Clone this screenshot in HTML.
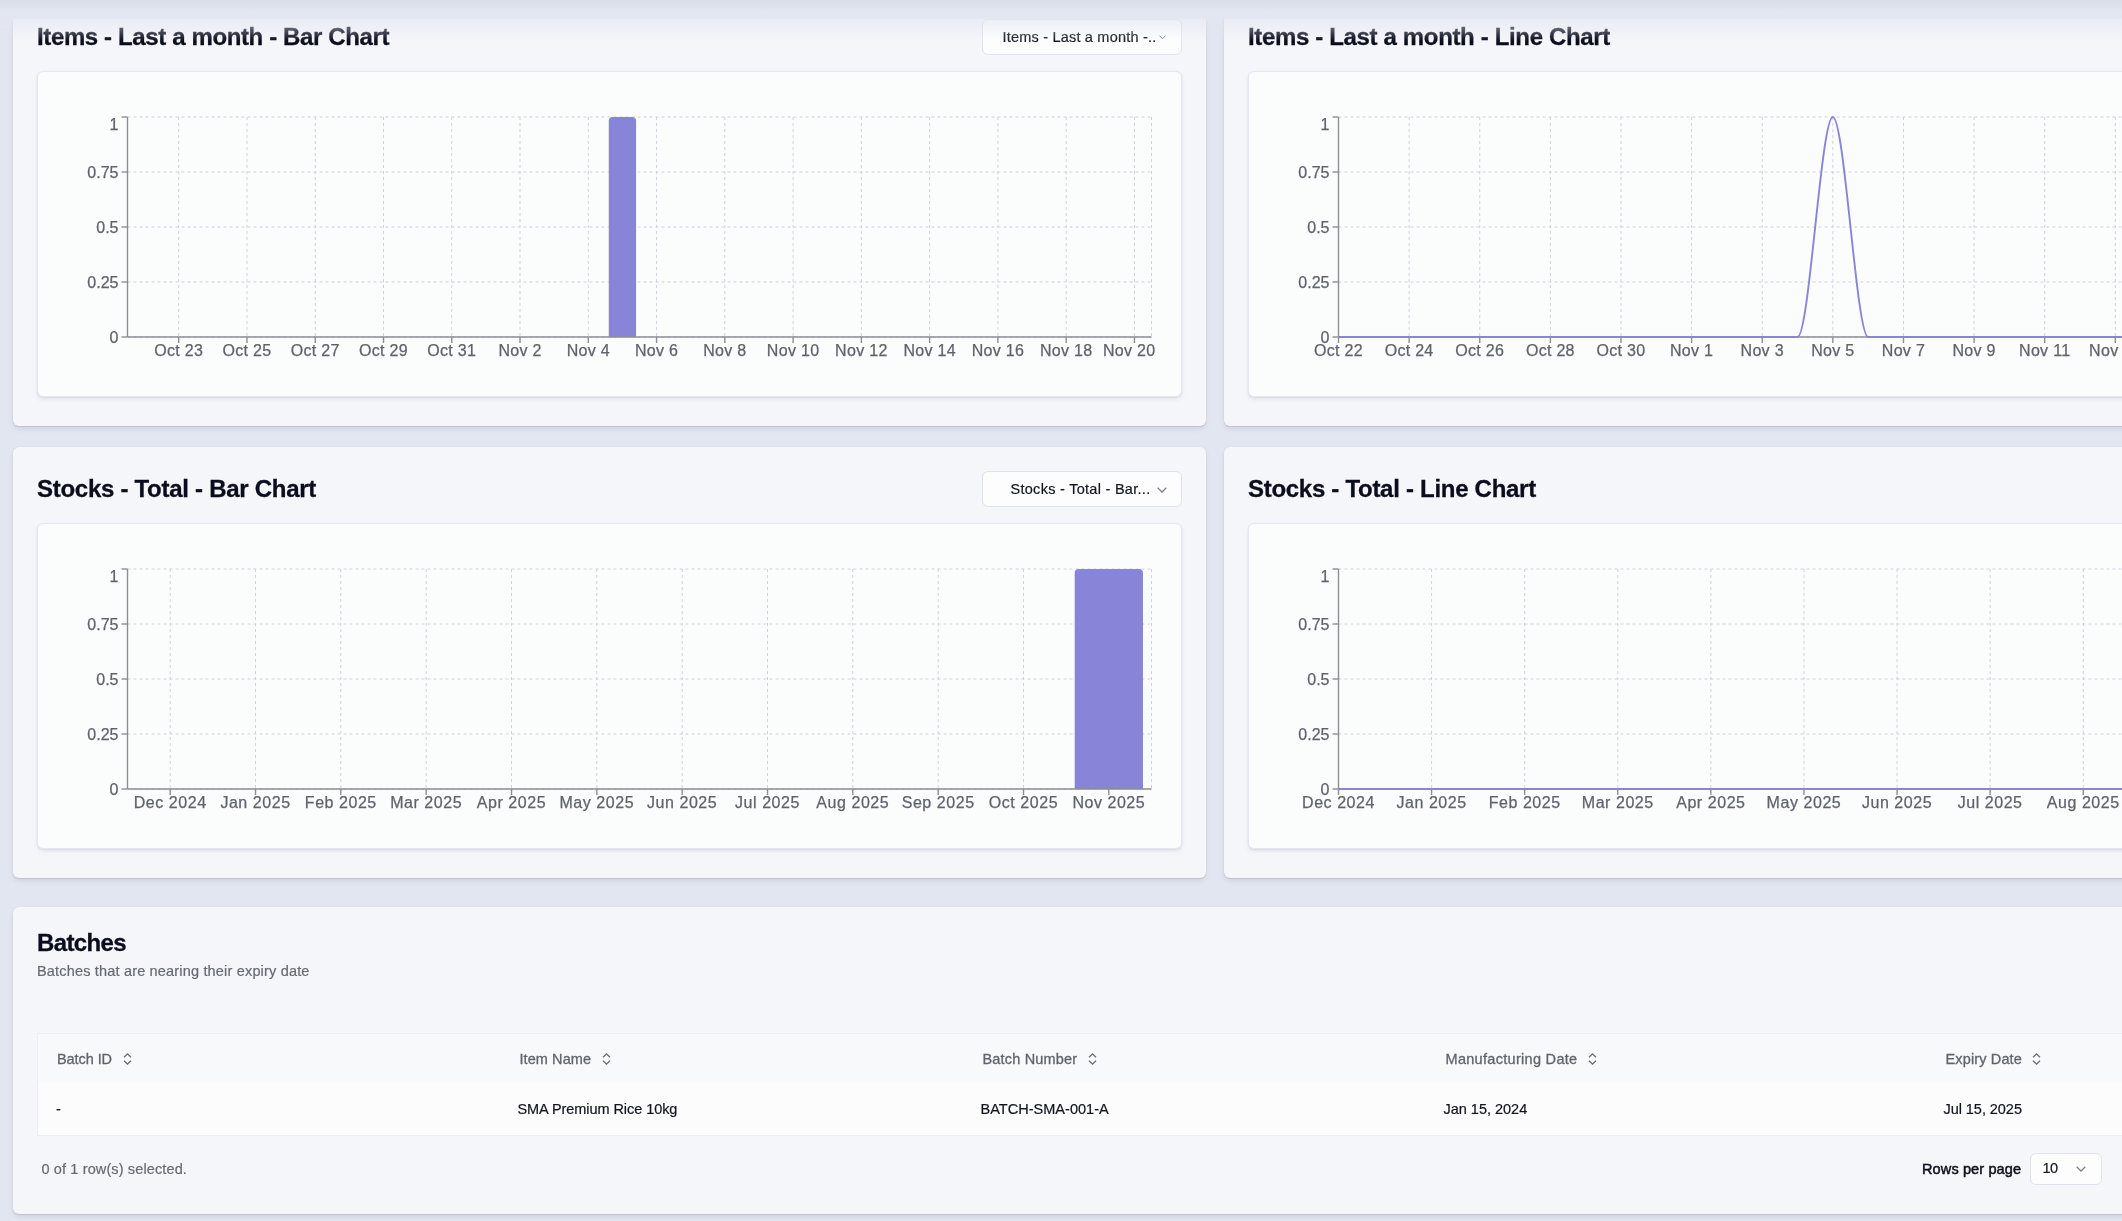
<!DOCTYPE html>
<html lang="en">
<head>
<meta charset="utf-8">
<title>Dashboard</title>
<style>
html,body{margin:0;padding:0;}
body{width:2122px;height:1221px;overflow:hidden;background:#e2e6f0;font-family:"Liberation Sans", sans-serif;position:relative;color:#0a0d1c;}
.card{position:absolute;background:#f5f6fa;border-radius:6px;box-shadow:0 1px 1px rgba(90,98,120,.17),0 3px 5px rgba(90,98,120,.13),0 0 1px rgba(90,98,120,.12);}
.inner{position:absolute;background:#fbfcfc;border:1px solid #e3e7f0;border-radius:6px;box-sizing:border-box;box-shadow:0 1px 2px rgba(90,98,120,.12),0 3px 4px rgba(90,98,120,.08);}
#app{position:absolute;left:0;top:0;width:2122px;height:1221px;overflow:hidden;will-change:transform;}
.chart{position:absolute;overflow:hidden;}
h2{position:absolute;margin:0;font-size:24px;font-weight:700;line-height:28px;white-space:nowrap;letter-spacing:-0.35px;color:#0a0d1c;-webkit-text-stroke:.3px #0a0d1c;}
.select{position:absolute;box-sizing:border-box;background:#fdfdfe;border:1px solid #dfe3ec;border-radius:6px;font-size:14.5px;color:#14161f;white-space:nowrap;}
.select span{position:absolute;top:0;line-height:34px;letter-spacing:.35px;-webkit-text-stroke:.2px #14161f;}
.chev{position:absolute;}
.sub{position:absolute;font-size:14.5px;color:#666a73;white-space:nowrap;-webkit-text-stroke:.2px #666a73;}
.th{position:absolute;font-size:14.5px;color:#60646d;white-space:nowrap;line-height:20px;-webkit-text-stroke:.3px #60646d;}
.td{position:absolute;font-size:14.5px;color:#12141d;white-space:nowrap;line-height:20px;-webkit-text-stroke:.2px #12141d;}
.sort{position:absolute;}
.fade{position:absolute;left:0;top:0;width:2122px;height:41px;background:linear-gradient(to bottom,rgb(218,221,231) 0,rgb(222,226,235) 5px,rgb(226,230,240) 10px,rgb(226,230,240) 17.5px,rgba(226,230,240,.62) 20px,rgba(226,230,240,0) 41px);}
</style>
</head>
<body>
<div id="app">
<div class="card" style="left:13px;top:-5px;width:1193px;height:431px"></div>
<div class="card" style="left:1224px;top:-5px;width:1193px;height:431px"></div>
<div class="card" style="left:13px;top:447px;width:1193px;height:431px"></div>
<div class="card" style="left:1224px;top:447px;width:1193px;height:431px"></div>
<div class="card" style="left:13px;top:907px;width:2404px;height:307px"></div>

<h2 style="left:37px;top:22.5px;letter-spacing:-.374px">Items - Last a month - Bar Chart</h2>
<h2 style="left:1248px;top:22.5px;letter-spacing:-.348px">Items - Last a month - Line Chart</h2>
<h2 style="left:37px;top:474.5px;letter-spacing:-.28px">Stocks - Total - Bar Chart</h2>
<h2 style="left:1248px;top:474.5px;letter-spacing:-.287px">Stocks - Total - Line Chart</h2>

<div class="select" style="left:982px;top:19px;width:200px;height:36px"><span style="left:19.5px;letter-spacing:.2px">Items - Last a month -..</span><svg class="chev" style="left:175.5px;top:15px" width="7" height="5" viewBox="0 0 7 5"><path d="M0.5 0.6L3.5 3.8L6.5 0.6" fill="none" stroke="#7c808a" stroke-width="1"/></svg></div>
<div class="select" style="left:982px;top:471px;width:200px;height:36px"><span style="left:27.5px;letter-spacing:.28px">Stocks - Total - Bar...</span><svg class="chev" style="left:174px;top:15px" width="10" height="6" viewBox="0 0 10 6"><path d="M0.7 0.7L5 5L9.3 0.7" fill="none" stroke="#7c808a" stroke-width="1.25"/></svg></div>

<div class="inner" style="left:37px;top:71px;width:1145px;height:326px"></div>
<div class="inner" style="left:1248px;top:71px;width:1145px;height:326px"></div>
<div class="inner" style="left:37px;top:523px;width:1145px;height:326px"></div>
<div class="inner" style="left:1248px;top:523px;width:1145px;height:326px"></div>
<svg class="chart" style="left:37px;top:71px" width="1145" height="326" viewBox="37 71 1145 326">
<g stroke="#cdd2df" stroke-width="1" stroke-dasharray="3 3" fill="none">
<line x1="127.5" y1="117" x2="1151.5" y2="117"/>
<line x1="127.5" y1="172" x2="1151.5" y2="172"/>
<line x1="127.5" y1="227" x2="1151.5" y2="227"/>
<line x1="127.5" y1="282" x2="1151.5" y2="282"/>
<line x1="127.5" y1="337" x2="1151.5" y2="337"/>
<line x1="127.5" y1="117" x2="127.5" y2="337"/>
<line x1="178.7" y1="117" x2="178.7" y2="337"/>
<line x1="246.97" y1="117" x2="246.97" y2="337"/>
<line x1="315.23" y1="117" x2="315.23" y2="337"/>
<line x1="383.5" y1="117" x2="383.5" y2="337"/>
<line x1="451.77" y1="117" x2="451.77" y2="337"/>
<line x1="520.03" y1="117" x2="520.03" y2="337"/>
<line x1="588.3" y1="117" x2="588.3" y2="337"/>
<line x1="656.57" y1="117" x2="656.57" y2="337"/>
<line x1="724.83" y1="117" x2="724.83" y2="337"/>
<line x1="793.1" y1="117" x2="793.1" y2="337"/>
<line x1="861.37" y1="117" x2="861.37" y2="337"/>
<line x1="929.63" y1="117" x2="929.63" y2="337"/>
<line x1="997.9" y1="117" x2="997.9" y2="337"/>
<line x1="1066.17" y1="117" x2="1066.17" y2="337"/>
<line x1="1134.43" y1="117" x2="1134.43" y2="337"/>
<line x1="1151.5" y1="117" x2="1151.5" y2="337"/>
</g>
<path fill="#8884d8" d="M608.78,121A4,4,0,0,1,612.78,117L632.09,117A4,4,0,0,1,636.09,121L636.09,337L608.78,337Z"/>
<g stroke="#8c8e95" stroke-width="1.4" fill="none">
<line x1="127.5" y1="117" x2="127.5" y2="337"/>
<line x1="127.5" y1="337" x2="1151.5" y2="337"/>
<line x1="121.5" y1="117" x2="127.5" y2="117"/>
<line x1="121.5" y1="172" x2="127.5" y2="172"/>
<line x1="121.5" y1="227" x2="127.5" y2="227"/>
<line x1="121.5" y1="282" x2="127.5" y2="282"/>
<line x1="121.5" y1="337" x2="127.5" y2="337"/>
<line x1="178.7" y1="337" x2="178.7" y2="343"/>
<line x1="246.97" y1="337" x2="246.97" y2="343"/>
<line x1="315.23" y1="337" x2="315.23" y2="343"/>
<line x1="383.5" y1="337" x2="383.5" y2="343"/>
<line x1="451.77" y1="337" x2="451.77" y2="343"/>
<line x1="520.03" y1="337" x2="520.03" y2="343"/>
<line x1="588.3" y1="337" x2="588.3" y2="343"/>
<line x1="656.57" y1="337" x2="656.57" y2="343"/>
<line x1="724.83" y1="337" x2="724.83" y2="343"/>
<line x1="793.1" y1="337" x2="793.1" y2="343"/>
<line x1="861.37" y1="337" x2="861.37" y2="343"/>
<line x1="929.63" y1="337" x2="929.63" y2="343"/>
<line x1="997.9" y1="337" x2="997.9" y2="343"/>
<line x1="1066.17" y1="337" x2="1066.17" y2="343"/>
<line x1="1134.43" y1="337" x2="1134.43" y2="343"/>
</g>
<g fill="#5f636c" stroke="#5f636c" stroke-width=".25" font-size="16" font-family='"Liberation Sans", sans-serif'>
<text x="118.5" y="129.8" text-anchor="end">1</text>
<text x="118.5" y="177.8" text-anchor="end">0.75</text>
<text x="118.5" y="232.8" text-anchor="end">0.5</text>
<text x="118.5" y="287.8" text-anchor="end">0.25</text>
<text x="118.5" y="342.8" text-anchor="end">0</text>
<text x="178.7" y="356.3" text-anchor="middle" letter-spacing="0.3">Oct 23</text>
<text x="246.97" y="356.3" text-anchor="middle" letter-spacing="0.3">Oct 25</text>
<text x="315.23" y="356.3" text-anchor="middle" letter-spacing="0.3">Oct 27</text>
<text x="383.5" y="356.3" text-anchor="middle" letter-spacing="0.3">Oct 29</text>
<text x="451.77" y="356.3" text-anchor="middle" letter-spacing="0.3">Oct 31</text>
<text x="520.03" y="356.3" text-anchor="middle" letter-spacing="0.3">Nov 2</text>
<text x="588.3" y="356.3" text-anchor="middle" letter-spacing="0.3">Nov 4</text>
<text x="656.57" y="356.3" text-anchor="middle" letter-spacing="0.3">Nov 6</text>
<text x="724.83" y="356.3" text-anchor="middle" letter-spacing="0.3">Nov 8</text>
<text x="793.1" y="356.3" text-anchor="middle" letter-spacing="0.3">Nov 10</text>
<text x="861.37" y="356.3" text-anchor="middle" letter-spacing="0.3">Nov 12</text>
<text x="929.63" y="356.3" text-anchor="middle" letter-spacing="0.3">Nov 14</text>
<text x="997.9" y="356.3" text-anchor="middle" letter-spacing="0.3">Nov 16</text>
<text x="1066.17" y="356.3" text-anchor="middle" letter-spacing="0.3">Nov 18</text>
<text x="1129.23" y="356.3" text-anchor="middle" letter-spacing="0.3">Nov 20</text>
</g>
</svg>
<svg class="chart" style="left:1248px;top:71px" width="874" height="326" viewBox="1248 71 874 326">
<g stroke="#cdd2df" stroke-width="1" stroke-dasharray="3 3" fill="none">
<line x1="1338.5" y1="117" x2="2362.5" y2="117"/>
<line x1="1338.5" y1="172" x2="2362.5" y2="172"/>
<line x1="1338.5" y1="227" x2="2362.5" y2="227"/>
<line x1="1338.5" y1="282" x2="2362.5" y2="282"/>
<line x1="1338.5" y1="337" x2="2362.5" y2="337"/>
<line x1="1338.5" y1="117" x2="1338.5" y2="337"/>
<line x1="1409.12" y1="117" x2="1409.12" y2="337"/>
<line x1="1479.74" y1="117" x2="1479.74" y2="337"/>
<line x1="1550.36" y1="117" x2="1550.36" y2="337"/>
<line x1="1620.98" y1="117" x2="1620.98" y2="337"/>
<line x1="1691.6" y1="117" x2="1691.6" y2="337"/>
<line x1="1762.22" y1="117" x2="1762.22" y2="337"/>
<line x1="1832.84" y1="117" x2="1832.84" y2="337"/>
<line x1="1903.47" y1="117" x2="1903.47" y2="337"/>
<line x1="1974.09" y1="117" x2="1974.09" y2="337"/>
<line x1="2044.71" y1="117" x2="2044.71" y2="337"/>
<line x1="2115.33" y1="117" x2="2115.33" y2="337"/>
<line x1="2185.95" y1="117" x2="2185.95" y2="337"/>
<line x1="2256.57" y1="117" x2="2256.57" y2="337"/>
<line x1="2327.19" y1="117" x2="2327.19" y2="337"/>
<line x1="2362.5" y1="117" x2="2362.5" y2="337"/>
</g>
<g stroke="#8c8e95" stroke-width="1.4" fill="none">
<line x1="1338.5" y1="117" x2="1338.5" y2="337"/>
<line x1="1338.5" y1="337" x2="2362.5" y2="337"/>
<line x1="1332.5" y1="117" x2="1338.5" y2="117"/>
<line x1="1332.5" y1="172" x2="1338.5" y2="172"/>
<line x1="1332.5" y1="227" x2="1338.5" y2="227"/>
<line x1="1332.5" y1="282" x2="1338.5" y2="282"/>
<line x1="1332.5" y1="337" x2="1338.5" y2="337"/>
<line x1="1338.5" y1="337" x2="1338.5" y2="343"/>
<line x1="1409.12" y1="337" x2="1409.12" y2="343"/>
<line x1="1479.74" y1="337" x2="1479.74" y2="343"/>
<line x1="1550.36" y1="337" x2="1550.36" y2="343"/>
<line x1="1620.98" y1="337" x2="1620.98" y2="343"/>
<line x1="1691.6" y1="337" x2="1691.6" y2="343"/>
<line x1="1762.22" y1="337" x2="1762.22" y2="343"/>
<line x1="1832.84" y1="337" x2="1832.84" y2="343"/>
<line x1="1903.47" y1="337" x2="1903.47" y2="343"/>
<line x1="1974.09" y1="337" x2="1974.09" y2="343"/>
<line x1="2044.71" y1="337" x2="2044.71" y2="343"/>
<line x1="2115.33" y1="337" x2="2115.33" y2="343"/>
<line x1="2185.95" y1="337" x2="2185.95" y2="343"/>
<line x1="2256.57" y1="337" x2="2256.57" y2="343"/>
<line x1="2327.19" y1="337" x2="2327.19" y2="343"/>
</g>
<path d="M1338.5,337C1350.27,337,1362.04,337,1373.81,337C1385.58,337,1397.35,337,1409.12,337C1420.89,337,1432.66,337,1444.43,337C1456.2,337,1467.97,337,1479.74,337C1491.51,337,1503.28,337,1515.05,337C1526.82,337,1538.59,337,1550.36,337C1562.13,337,1573.9,337,1585.67,337C1597.44,337,1609.21,337,1620.98,337C1632.75,337,1644.52,337,1656.29,337C1668.06,337,1679.83,337,1691.6,337C1703.37,337,1715.14,337,1726.91,337C1738.68,337,1750.45,337,1762.22,337C1773.99,337,1785.76,337,1797.53,337C1809.3,337,1821.07,117,1832.84,117C1844.61,117,1856.39,337,1868.16,337C1879.93,337,1891.7,337,1903.47,337C1915.24,337,1927.01,337,1938.78,337C1950.55,337,1962.32,337,1974.09,337C1985.86,337,1997.63,337,2009.4,337C2021.17,337,2032.94,337,2044.71,337C2056.48,337,2068.25,337,2080.02,337C2091.79,337,2103.56,337,2115.33,337C2127.1,337,2138.87,337,2150.64,337C2162.41,337,2174.18,337,2185.95,337C2197.72,337,2209.49,337,2221.26,337C2233.03,337,2244.8,337,2256.57,337C2268.34,337,2280.11,337,2291.88,337C2303.65,337,2315.42,337,2327.19,337C2338.96,337,2350.73,337,2362.5,337" fill="none" stroke="#8884d8" stroke-width="1.9"/>
<g fill="#5f636c" stroke="#5f636c" stroke-width=".25" font-size="16" font-family='"Liberation Sans", sans-serif'>
<text x="1329.5" y="129.8" text-anchor="end">1</text>
<text x="1329.5" y="177.8" text-anchor="end">0.75</text>
<text x="1329.5" y="232.8" text-anchor="end">0.5</text>
<text x="1329.5" y="287.8" text-anchor="end">0.25</text>
<text x="1329.5" y="342.8" text-anchor="end">0</text>
<text x="1338.5" y="356.3" text-anchor="middle" letter-spacing="0.3">Oct 22</text>
<text x="1409.12" y="356.3" text-anchor="middle" letter-spacing="0.3">Oct 24</text>
<text x="1479.74" y="356.3" text-anchor="middle" letter-spacing="0.3">Oct 26</text>
<text x="1550.36" y="356.3" text-anchor="middle" letter-spacing="0.3">Oct 28</text>
<text x="1620.98" y="356.3" text-anchor="middle" letter-spacing="0.3">Oct 30</text>
<text x="1691.6" y="356.3" text-anchor="middle" letter-spacing="0.3">Nov 1</text>
<text x="1762.22" y="356.3" text-anchor="middle" letter-spacing="0.3">Nov 3</text>
<text x="1832.84" y="356.3" text-anchor="middle" letter-spacing="0.3">Nov 5</text>
<text x="1903.47" y="356.3" text-anchor="middle" letter-spacing="0.3">Nov 7</text>
<text x="1974.09" y="356.3" text-anchor="middle" letter-spacing="0.3">Nov 9</text>
<text x="2044.71" y="356.3" text-anchor="middle" letter-spacing="0.3">Nov 11</text>
<text x="2115.33" y="356.3" text-anchor="middle" letter-spacing="0.3">Nov 13</text>
<text x="2185.95" y="356.3" text-anchor="middle" letter-spacing="0.3">Nov 15</text>
<text x="2256.57" y="356.3" text-anchor="middle" letter-spacing="0.3">Nov 17</text>
<text x="2327.19" y="356.3" text-anchor="middle" letter-spacing="0.3">Nov 19</text>
</g>
</svg>
<svg class="chart" style="left:37px;top:523px" width="1145" height="326" viewBox="37 523 1145 326">
<g stroke="#cdd2df" stroke-width="1" stroke-dasharray="3 3" fill="none">
<line x1="127.5" y1="569" x2="1151.5" y2="569"/>
<line x1="127.5" y1="624" x2="1151.5" y2="624"/>
<line x1="127.5" y1="679" x2="1151.5" y2="679"/>
<line x1="127.5" y1="734" x2="1151.5" y2="734"/>
<line x1="127.5" y1="789" x2="1151.5" y2="789"/>
<line x1="127.5" y1="569" x2="127.5" y2="789"/>
<line x1="170.17" y1="569" x2="170.17" y2="789"/>
<line x1="255.5" y1="569" x2="255.5" y2="789"/>
<line x1="340.83" y1="569" x2="340.83" y2="789"/>
<line x1="426.17" y1="569" x2="426.17" y2="789"/>
<line x1="511.5" y1="569" x2="511.5" y2="789"/>
<line x1="596.83" y1="569" x2="596.83" y2="789"/>
<line x1="682.17" y1="569" x2="682.17" y2="789"/>
<line x1="767.5" y1="569" x2="767.5" y2="789"/>
<line x1="852.83" y1="569" x2="852.83" y2="789"/>
<line x1="938.17" y1="569" x2="938.17" y2="789"/>
<line x1="1023.5" y1="569" x2="1023.5" y2="789"/>
<line x1="1108.83" y1="569" x2="1108.83" y2="789"/>
<line x1="1151.5" y1="569" x2="1151.5" y2="789"/>
</g>
<path fill="#8884d8" d="M1074.7,573A4,4,0,0,1,1078.7,569L1138.97,569A4,4,0,0,1,1142.97,573L1142.97,789L1074.7,789Z"/>
<g stroke="#8c8e95" stroke-width="1.4" fill="none">
<line x1="127.5" y1="569" x2="127.5" y2="789"/>
<line x1="127.5" y1="789" x2="1151.5" y2="789"/>
<line x1="121.5" y1="569" x2="127.5" y2="569"/>
<line x1="121.5" y1="624" x2="127.5" y2="624"/>
<line x1="121.5" y1="679" x2="127.5" y2="679"/>
<line x1="121.5" y1="734" x2="127.5" y2="734"/>
<line x1="121.5" y1="789" x2="127.5" y2="789"/>
<line x1="170.17" y1="789" x2="170.17" y2="795"/>
<line x1="255.5" y1="789" x2="255.5" y2="795"/>
<line x1="340.83" y1="789" x2="340.83" y2="795"/>
<line x1="426.17" y1="789" x2="426.17" y2="795"/>
<line x1="511.5" y1="789" x2="511.5" y2="795"/>
<line x1="596.83" y1="789" x2="596.83" y2="795"/>
<line x1="682.17" y1="789" x2="682.17" y2="795"/>
<line x1="767.5" y1="789" x2="767.5" y2="795"/>
<line x1="852.83" y1="789" x2="852.83" y2="795"/>
<line x1="938.17" y1="789" x2="938.17" y2="795"/>
<line x1="1023.5" y1="789" x2="1023.5" y2="795"/>
<line x1="1108.83" y1="789" x2="1108.83" y2="795"/>
</g>
<g fill="#5f636c" stroke="#5f636c" stroke-width=".25" font-size="16" font-family='"Liberation Sans", sans-serif'>
<text x="118.5" y="581.8" text-anchor="end">1</text>
<text x="118.5" y="629.8" text-anchor="end">0.75</text>
<text x="118.5" y="684.8" text-anchor="end">0.5</text>
<text x="118.5" y="739.8" text-anchor="end">0.25</text>
<text x="118.5" y="794.8" text-anchor="end">0</text>
<text x="170.17" y="808.3" text-anchor="middle" letter-spacing="0.55">Dec 2024</text>
<text x="255.5" y="808.3" text-anchor="middle" letter-spacing="0.55">Jan 2025</text>
<text x="340.83" y="808.3" text-anchor="middle" letter-spacing="0.55">Feb 2025</text>
<text x="426.17" y="808.3" text-anchor="middle" letter-spacing="0.55">Mar 2025</text>
<text x="511.5" y="808.3" text-anchor="middle" letter-spacing="0.55">Apr 2025</text>
<text x="596.83" y="808.3" text-anchor="middle" letter-spacing="0.55">May 2025</text>
<text x="682.17" y="808.3" text-anchor="middle" letter-spacing="0.55">Jun 2025</text>
<text x="767.5" y="808.3" text-anchor="middle" letter-spacing="0.55">Jul 2025</text>
<text x="852.83" y="808.3" text-anchor="middle" letter-spacing="0.55">Aug 2025</text>
<text x="938.17" y="808.3" text-anchor="middle" letter-spacing="0.55">Sep 2025</text>
<text x="1023.5" y="808.3" text-anchor="middle" letter-spacing="0.55">Oct 2025</text>
<text x="1108.83" y="808.3" text-anchor="middle" letter-spacing="0.55">Nov 2025</text>
</g>
</svg>
<svg class="chart" style="left:1248px;top:523px" width="874" height="326" viewBox="1248 523 874 326">
<g stroke="#cdd2df" stroke-width="1" stroke-dasharray="3 3" fill="none">
<line x1="1338.5" y1="569" x2="2362.5" y2="569"/>
<line x1="1338.5" y1="624" x2="2362.5" y2="624"/>
<line x1="1338.5" y1="679" x2="2362.5" y2="679"/>
<line x1="1338.5" y1="734" x2="2362.5" y2="734"/>
<line x1="1338.5" y1="789" x2="2362.5" y2="789"/>
<line x1="1338.5" y1="569" x2="1338.5" y2="789"/>
<line x1="1431.59" y1="569" x2="1431.59" y2="789"/>
<line x1="1524.68" y1="569" x2="1524.68" y2="789"/>
<line x1="1617.77" y1="569" x2="1617.77" y2="789"/>
<line x1="1710.86" y1="569" x2="1710.86" y2="789"/>
<line x1="1803.95" y1="569" x2="1803.95" y2="789"/>
<line x1="1897.05" y1="569" x2="1897.05" y2="789"/>
<line x1="1990.14" y1="569" x2="1990.14" y2="789"/>
<line x1="2083.23" y1="569" x2="2083.23" y2="789"/>
<line x1="2176.32" y1="569" x2="2176.32" y2="789"/>
<line x1="2269.41" y1="569" x2="2269.41" y2="789"/>
<line x1="2362.5" y1="569" x2="2362.5" y2="789"/>
</g>
<g stroke="#8c8e95" stroke-width="1.4" fill="none">
<line x1="1338.5" y1="569" x2="1338.5" y2="789"/>
<line x1="1338.5" y1="789" x2="2362.5" y2="789"/>
<line x1="1332.5" y1="569" x2="1338.5" y2="569"/>
<line x1="1332.5" y1="624" x2="1338.5" y2="624"/>
<line x1="1332.5" y1="679" x2="1338.5" y2="679"/>
<line x1="1332.5" y1="734" x2="1338.5" y2="734"/>
<line x1="1332.5" y1="789" x2="1338.5" y2="789"/>
<line x1="1338.5" y1="789" x2="1338.5" y2="795"/>
<line x1="1431.59" y1="789" x2="1431.59" y2="795"/>
<line x1="1524.68" y1="789" x2="1524.68" y2="795"/>
<line x1="1617.77" y1="789" x2="1617.77" y2="795"/>
<line x1="1710.86" y1="789" x2="1710.86" y2="795"/>
<line x1="1803.95" y1="789" x2="1803.95" y2="795"/>
<line x1="1897.05" y1="789" x2="1897.05" y2="795"/>
<line x1="1990.14" y1="789" x2="1990.14" y2="795"/>
<line x1="2083.23" y1="789" x2="2083.23" y2="795"/>
<line x1="2176.32" y1="789" x2="2176.32" y2="795"/>
<line x1="2269.41" y1="789" x2="2269.41" y2="795"/>
<line x1="2362.5" y1="789" x2="2362.5" y2="795"/>
</g>
<path d="M1338.5,789C1369.53,789,1400.56,789,1431.59,789C1462.62,789,1493.65,789,1524.68,789C1555.71,789,1586.74,789,1617.77,789C1648.8,789,1679.83,789,1710.86,789C1741.89,789,1772.92,789,1803.95,789C1834.98,789,1866.02,789,1897.05,789C1928.08,789,1959.11,789,1990.14,789C2021.17,789,2052.2,789,2083.23,789C2114.26,789,2145.29,789,2176.32,789C2207.35,789,2238.38,789,2269.41,789C2300.44,789,2331.47,569,2362.5,569" fill="none" stroke="#8884d8" stroke-width="1.9"/>
<g fill="#5f636c" stroke="#5f636c" stroke-width=".25" font-size="16" font-family='"Liberation Sans", sans-serif'>
<text x="1329.5" y="581.8" text-anchor="end">1</text>
<text x="1329.5" y="629.8" text-anchor="end">0.75</text>
<text x="1329.5" y="684.8" text-anchor="end">0.5</text>
<text x="1329.5" y="739.8" text-anchor="end">0.25</text>
<text x="1329.5" y="794.8" text-anchor="end">0</text>
<text x="1338.5" y="808.3" text-anchor="middle" letter-spacing="0.55">Dec 2024</text>
<text x="1431.59" y="808.3" text-anchor="middle" letter-spacing="0.55">Jan 2025</text>
<text x="1524.68" y="808.3" text-anchor="middle" letter-spacing="0.55">Feb 2025</text>
<text x="1617.77" y="808.3" text-anchor="middle" letter-spacing="0.55">Mar 2025</text>
<text x="1710.86" y="808.3" text-anchor="middle" letter-spacing="0.55">Apr 2025</text>
<text x="1803.95" y="808.3" text-anchor="middle" letter-spacing="0.55">May 2025</text>
<text x="1897.05" y="808.3" text-anchor="middle" letter-spacing="0.55">Jun 2025</text>
<text x="1990.14" y="808.3" text-anchor="middle" letter-spacing="0.55">Jul 2025</text>
<text x="2083.23" y="808.3" text-anchor="middle" letter-spacing="0.55">Aug 2025</text>
<text x="2176.32" y="808.3" text-anchor="middle" letter-spacing="0.55">Sep 2025</text>
<text x="2269.41" y="808.3" text-anchor="middle" letter-spacing="0.55">Oct 2025</text>
<text x="2362.5" y="808.3" text-anchor="middle" letter-spacing="0.55">Nov 2025</text>
</g>
</svg>

<h2 style="left:37px;top:928.5px;letter-spacing:-.625px">Batches</h2>
<div class="sub" style="left:37px;top:962px;line-height:18px;letter-spacing:0.176px">Batches that are nearing their expiry date</div>

<div style="position:absolute;left:37px;top:1033px;width:2360px;height:103px;box-sizing:border-box;border:1px solid #eceef4;background:#fcfcfd"><div style="height:48px;background:#f8f9fb"></div></div>
<div class="th" style="left:57px;top:1049px;letter-spacing:-0.076px">Batch ID</div><svg class="sort" style="left:122.5px;top:1053px" width="9" height="12" viewBox="0 0 9 12"><path d="M1 4.2L4.5 0.9L8 4.2M1 7.8L4.5 11.1L8 7.8" fill="none" stroke="#666a73" stroke-width="1.3"/></svg>
<div class="th" style="left:519.5px;top:1049px;letter-spacing:0.075px">Item Name</div><svg class="sort" style="left:601.5px;top:1053px" width="9" height="12" viewBox="0 0 9 12"><path d="M1 4.2L4.5 0.9L8 4.2M1 7.8L4.5 11.1L8 7.8" fill="none" stroke="#666a73" stroke-width="1.3"/></svg>
<div class="th" style="left:982.5px;top:1049px;letter-spacing:0.176px">Batch Number</div><svg class="sort" style="left:1087.5px;top:1053px" width="9" height="12" viewBox="0 0 9 12"><path d="M1 4.2L4.5 0.9L8 4.2M1 7.8L4.5 11.1L8 7.8" fill="none" stroke="#666a73" stroke-width="1.3"/></svg>
<div class="th" style="left:1445.5px;top:1049px;letter-spacing:0.3px">Manufacturing Date</div><svg class="sort" style="left:1587.5px;top:1053px" width="9" height="12" viewBox="0 0 9 12"><path d="M1 4.2L4.5 0.9L8 4.2M1 7.8L4.5 11.1L8 7.8" fill="none" stroke="#666a73" stroke-width="1.3"/></svg>
<div class="th" style="left:1945.5px;top:1049px;letter-spacing:0.14px">Expiry Date</div><svg class="sort" style="left:2031.5px;top:1053px" width="9" height="12" viewBox="0 0 9 12"><path d="M1 4.2L4.5 0.9L8 4.2M1 7.8L4.5 11.1L8 7.8" fill="none" stroke="#666a73" stroke-width="1.3"/></svg>
<div class="td" style="left:56px;top:1099px">-</div>
<div class="td" style="left:517.5px;top:1099px;letter-spacing:-0.063px">SMA Premium Rice 10kg</div>
<div class="td" style="left:980.5px;top:1099px;letter-spacing:0.024px">BATCH-SMA-001-A</div>
<div class="td" style="left:1443.5px;top:1099px;letter-spacing:-0.013px">Jan 15, 2024</div>
<div class="td" style="left:1943.5px;top:1099px;letter-spacing:-0.051px">Jul 15, 2025</div>

<div class="sub" style="left:41.5px;top:1159px;line-height:20px;letter-spacing:0.124px">0 of 1 row(s) selected.</div>
<div class="td" style="left:1922px;top:1159px;letter-spacing:.125px;-webkit-text-stroke:.5px #0e111d;color:#0e111d">Rows per page</div>
<div class="select" style="left:2030px;top:1153px;width:72px;height:32px"><span style="left:11.5px;line-height:29px;letter-spacing:-.6px">10</span><svg class="chev" style="left:45px;top:11.5px" width="10" height="6" viewBox="0 0 10 6"><path d="M0.7 0.7L5 5L9.3 0.7" fill="none" stroke="#7c808a" stroke-width="1.25"/></svg></div>

<div class="fade"></div>
</div>
</body>
</html>
